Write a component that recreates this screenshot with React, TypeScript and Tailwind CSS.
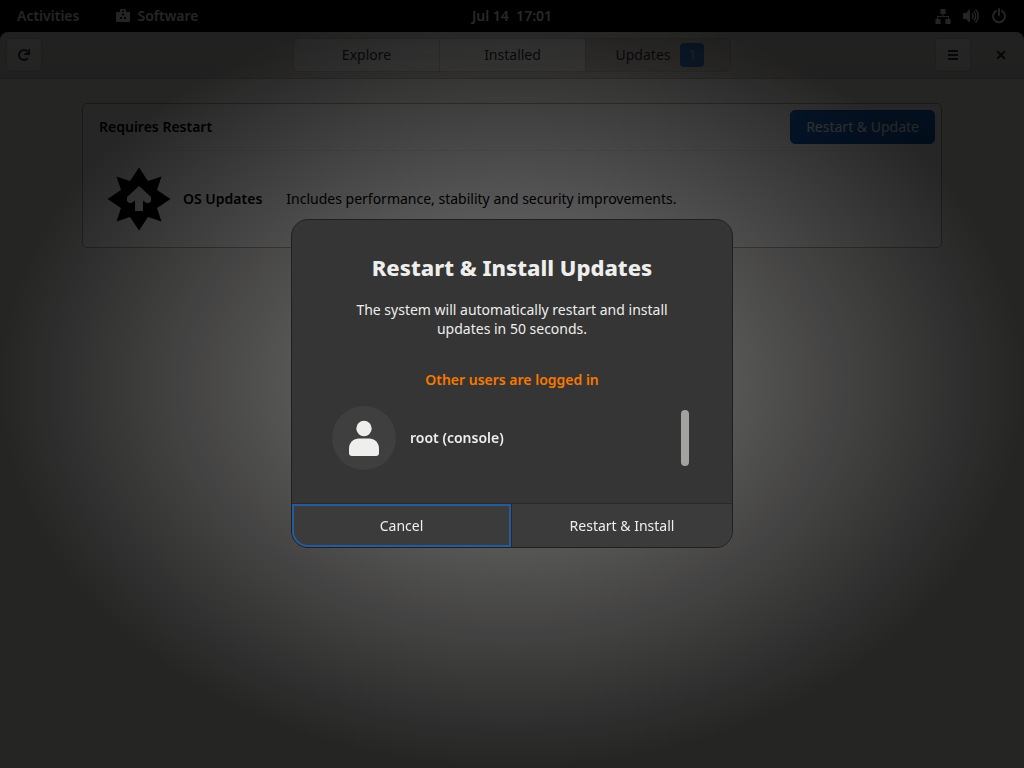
import type { ReactNode } from "react";

type IconProps = { children: ReactNode; className?: string };

function SymbolicIcon({ children, className = "size-4" }: IconProps) {
  return (
    <svg viewBox="0 0 16 16" className={className} fill="currentColor" aria-hidden="true">
      {children}
    </svg>
  );
}

function TopBar() {
  return (
    <header className="grid h-8 grid-cols-[1fr_auto_1fr] items-center bg-black px-[17px] font-semibold text-[#f2f2f2]">
      <nav className="flex items-center gap-9">
        <button type="button">Activities</button>
        <button type="button" className="flex items-center gap-[6px]">
          <SymbolicIcon>
            <path
              fillRule="evenodd"
              d="M5 4V2a1 1 0 0 1 1-1h4a1 1 0 0 1 1 1v2h3a1 1 0 0 1 1 1v8a1 1 0 0 1-1 1H2a1 1 0 0 1-1-1V5a1 1 0 0 1 1-1zM7 2.500V4h2V2.500zM7 5.500v2h2v-2zM5 9v2h2V9zM9 9v2h2V9z"
            />
          </SymbolicIcon>
          Software
        </button>
      </nav>
      <button type="button" className="whitespace-pre">Jul 14  17:01</button>
      <button type="button" aria-label="System menu" className="flex items-center gap-3 justify-self-end">
        <SymbolicIcon>
          <path d="M5.500 1h5v5h-2v2H14v3h1.500v5h-5v-5H13V9H3v2h2.500v5h-5v-5H2V8h5.500V6h-2z" />
        </SymbolicIcon>
        <SymbolicIcon>
          <path d="M0 5h3l4-4v14l-4-4H0z" />
          <path
            d="M9 5.500a3.500 3.500 0 0 1 0 5M10.800 3.500a6.200 6.200 0 0 1 0 9M12.500 1.500a9 9 0 0 1 0 13"
            fill="none"
            stroke="currentColor"
            strokeWidth="1.500"
          />
        </SymbolicIcon>
        <SymbolicIcon>
          <path d="M5 3.100a6 6 0 1 0 6 0M8 1v6" fill="none" stroke="currentColor" strokeWidth="2" strokeLinecap="round" />
        </SymbolicIcon>
      </button>
    </header>
  );
}

const raised = "border border-[#cdc7c2] bg-linear-to-b from-[#f6f5f4] to-[#edebe9]";

function HeaderBar() {
  return (
    <div className="grid h-[47px] grid-cols-[1fr_438px_1fr] items-center rounded-t-lg border-b border-[#bfb8b1] bg-linear-to-b from-[#e1dedb] to-[#dad6d2] px-[6px]">
      <button
        type="button"
        aria-label="Refresh"
        className={`flex h-[34px] w-9 items-center justify-center rounded-[5px] ${raised}`}
      >
        <SymbolicIcon>
          <path d="M11.900 11.200A5 5 0 1 1 11.500 4.500" fill="none" stroke="currentColor" strokeWidth="2" />
          <path d="M14 2v6H8V6.500h2L12.500 4V2z" />
        </SymbolicIcon>
      </button>
      <div className="grid h-[34px] grid-cols-3">
        <button type="button" className={`rounded-l-[5px] border-r-0 ${raised}`}>Explore</button>
        <button type="button" className={`border-r-0 ${raised}`}>Installed</button>
        <button
          type="button"
          className="flex items-center justify-center gap-[10px] rounded-r-[5px] border border-[#c4bdb6] bg-[#d2cdc8] pl-1"
        >
          Updates
          <span className="flex size-6 items-center justify-center rounded-[4px] bg-[#3a77c2] text-[#8fb5e4]">1</span>
        </button>
      </div>
      <div className="flex items-center gap-[22px] justify-self-end pr-[9px]">
        <button
          type="button"
          aria-label="Main menu"
          className={`flex h-[34px] w-9 items-center justify-center rounded-[5px] ${raised}`}
        >
          <SymbolicIcon>
            <path d="M3 3h10v2H3zM3 7h10v2H3zM3 11h10v2H3z" />
          </SymbolicIcon>
        </button>
        <button type="button" aria-label="Close">
          <SymbolicIcon>
            <path d="M5 5l6 6M11 5l-6 6" stroke="currentColor" strokeWidth="2.200" strokeLinecap="square" />
          </SymbolicIcon>
        </button>
      </div>
    </div>
  );
}

function UpdatesPage() {
  return (
    <main className="flex-1 bg-[#f6f5f2] px-6 pt-6">
      <section className="mx-auto max-w-[860px] rounded-[5px] border border-[#b0aaa4] bg-white">
        <div className="flex h-[46px] items-center justify-between pr-[6px] pl-4">
          <h2 className="font-semibold text-black">Requires Restart</h2>
          <button
            type="button"
            className="h-[34px] rounded-[5px] border border-[#15539e] bg-linear-to-b from-[#1a68c8] to-[#1257b0] px-[15px] text-white"
          >
            Restart &amp; Update
          </button>
        </div>
        <hr className="mx-4 border-[#ebebeb]" />
        <div className="flex items-center px-6 py-4 text-black">
          <svg viewBox="0 0 64 64" className="size-16 shrink-0" aria-hidden="true">
            <path d="M32 .500L41 14 54.500 9.500 50 23 63.500 32 50 41 54.500 54.500 41 50 32 63.500 23 50 9.500 54.500 14 41 .500 32 14 23 9.500 9.500 23 14z" />
            <path d="M32 19L44 30v4l-2 2h-2.500L36 33.500V44h-8V33.500L24.500 36H22l-2-2v-4z" fill="#ffffff" />
          </svg>
          <strong className="ml-3 font-semibold whitespace-nowrap">OS Updates</strong>
          <p className="ml-6">Includes performance, stability and security improvements.</p>
        </div>
      </section>
    </main>
  );
}

function RestartDialog() {
  return (
    <div
      role="dialog"
      aria-modal="true"
      aria-labelledby="restart-title"
      className="w-[442px] rounded-[17px] border border-[#202020] bg-[#353535] text-[#eeeeec]"
    >
      <div className="flex h-[283px] flex-col px-10 pt-[31px]">
        <h1 id="restart-title" className="text-center text-[22px] leading-8 font-extrabold">
          Restart &amp; Install Updates
        </h1>
        <p className="mt-[17px] px-4 text-center leading-[19px]">
          The system will automatically restart and install updates in 50 seconds.
        </p>
        <p className="mt-8 text-center leading-[19px] font-semibold text-[#f57900]">Other users are logged in</p>
        <div className="mt-[17px] flex items-center">
          <svg viewBox="0 0 64 64" className="size-16" aria-hidden="true">
            <circle cx="32" cy="32" r="32" fill="#3f3f3f" />
            <circle cx="32" cy="22.500" r="7.700" fill="#eeeeec" />
            <path
              d="M17 47V42.500c0-6 4.500-10 10-10h10c5.500 0 10 4 10 10V47a3 3 0 0 1-3 3H20a3 3 0 0 1-3-3z"
              fill="#eeeeec"
            />
          </svg>
          <span className="ml-[14px] font-semibold">root (console)</span>
          <span className="mr-[3px] ml-auto h-14 w-2 rounded-full bg-[#a2a2a0]" />
        </div>
      </div>
      <div className="grid h-11 grid-cols-[219fr_221fr] border-t border-[#292929]">
        <button type="button" className="rounded-bl-2xl border-2 border-[#275a9c] bg-[#3b3b3b]">
          Cancel
        </button>
        <button type="button" className="rounded-br-2xl border-l border-[#292929] bg-[#3b3b3b]">
          Restart &amp; Install
        </button>
      </div>
    </div>
  );
}

export default function App() {
  return (
    <div className="flex min-h-screen flex-col bg-black font-['Noto_Sans',sans-serif] text-[14px] leading-5 text-[#2e3436]">
      <TopBar />
      <HeaderBar />
      <UpdatesPage />
      <div className="fixed inset-0 flex items-center justify-center bg-[radial-gradient(50%_50%_at_center,rgb(0_0_0/0.5),rgb(0_0_0/0.85))] pb-px">
        <RestartDialog />
      </div>
    </div>
  );
}
